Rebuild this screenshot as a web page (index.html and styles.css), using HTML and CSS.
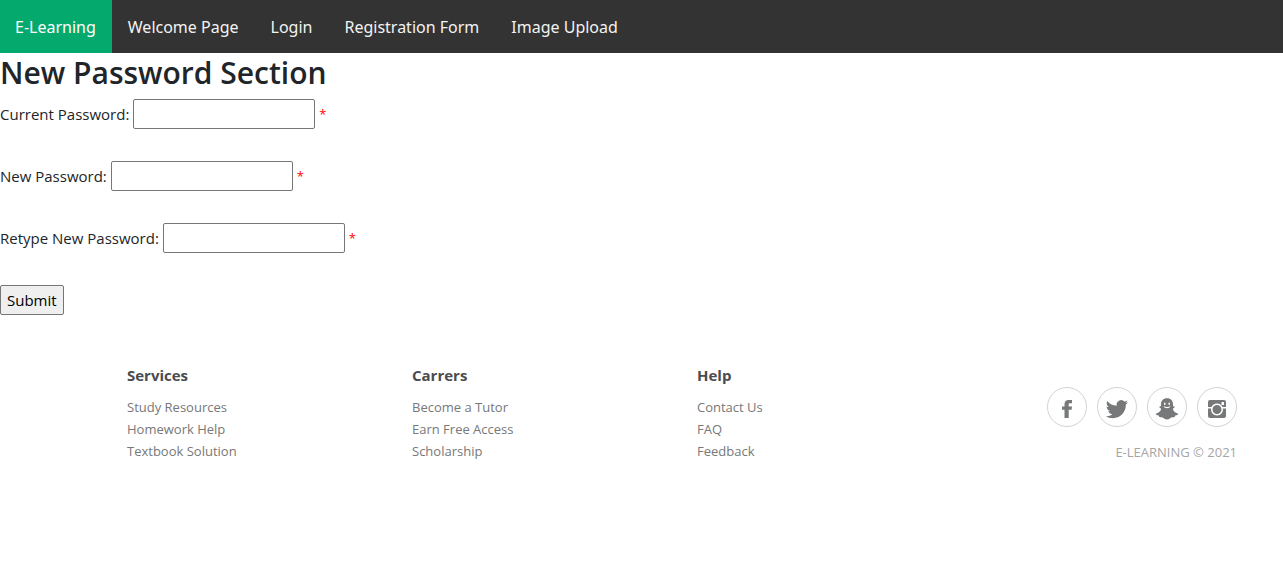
FILE: index.html
```html
<!DOCTYPE html>
<html lang="en">
<head>
<meta charset="utf-8">
<meta name="viewport" content="width=device-width, initial-scale=1">
<title>E-Learning - New Password</title>
<link rel="stylesheet" href="styles.css">
</head>
<body>
<nav class="topnav">
  <a class="active" href="#">E-Learning</a>
  <a href="#">Welcome Page</a>
  <a href="#">Login</a>
  <a href="#">Registration Form</a>
  <a href="#">Image Upload</a>
</nav>
<main>
  <h2 class="title">New Password Section</h2>
  <form class="password-form">
    <div class="field">
      <label for="current">Current Password:</label>
      <input type="password" id="current">
      <span class="required">*</span>
    </div>
    <div class="field">
      <label for="new">New Password:</label>
      <input type="password" id="new">
      <span class="required">*</span>
    </div>
    <div class="field">
      <label for="retype">Retype New Password:</label>
      <input type="password" id="retype">
      <span class="required">*</span>
    </div>
    <button class="submit" type="submit">Submit</button>
  </form>
</main>
<footer class="footer">
  <div class="column">
    <h3>Services</h3>
    <ul>
      <li><a href="#">Study Resources</a></li>
      <li><a href="#">Homework Help</a></li>
      <li><a href="#">Textbook Solution</a></li>
    </ul>
  </div>
  <div class="column">
    <h3>Carrers</h3>
    <ul>
      <li><a href="#">Become a Tutor</a></li>
      <li><a href="#">Earn Free Access</a></li>
      <li><a href="#">Scholarship</a></li>
    </ul>
  </div>
  <div class="column">
    <h3>Help</h3>
    <ul>
      <li><a href="#">Contact Us</a></li>
      <li><a href="#">FAQ</a></li>
      <li><a href="#">Feedback</a></li>
    </ul>
  </div>
  <div class="social">
    <div class="icons">
      <a href="#" aria-label="Facebook"><svg viewBox="0 0 24 24"><path d="M9.500 21v-8.200H7V9.500h2.500V7.300C9.500 4.500 11 3 13.800 3H17v3.300h-1.800c-1.200 0-1.500.5-1.500 1.400v1.800H17l-.4 3.300h-2.900V21z"/></svg></a>
      <a href="#" aria-label="Twitter"><svg viewBox="0 0 24 24"><path d="M23 5.200c-.8.400-1.700.6-2.600.7 1-.6 1.700-1.500 2-2.500-.9.500-1.900.9-2.900 1.100A4.600 4.600 0 0 0 11.700 8.700C7.900 8.500 4.500 6.700 2.300 3.900c-1.200 2.100-.6 4.700 1.400 6.100-.8 0-1.500-.2-2.100-.6 0 2.200 1.500 4.100 3.700 4.600-.7.200-1.400.2-2.100.1.600 1.900 2.300 3.100 4.300 3.200A9.300 9.300 0 0 1 .8 19.200C2.800 20.500 5.200 21.200 7.800 21.200c8.600 0 13.400-7.200 13-13.600.9-.7 1.700-1.500 2.200-2.400z"/></svg></a>
      <a href="#" aria-label="Snapchat"><svg viewBox="0 0 24 24"><path fill-rule="evenodd" d="M12 1.200c3.900 0 6 2.600 6 6v2.200c.9-.3 1.700.1 1.600.8-.1.800-1.900 1-1.700 1.900.4 1.900 2.300 4 4.700 4.400.8.200.7.800.3 1.100-.7.600-1.700.8-2.700 1-.3.500-.2 1.300-.6 1.500-.8.300-2-.2-3.200.3-1.200.6-2.300 2.100-4.400 2.100s-3.200-1.500-4.400-2.100c-1.200-.5-2.400 0-3.200-.3-.4-.2-.3-1-.6-1.500-1-.2-2-.4-2.700-1-.4-.3-.5-.9.300-1.100 2.400-.4 4.300-2.500 4.700-4.400.2-.9-1.600-1.100-1.700-1.900-.1-.7.700-1.100 1.600-.8V7.200c0-3.400 2.100-6 6-6zM9 5.800v2h1.500v-2zm4.500 0v2H15v-2zM8.500 9c.6 1.500 1.900 2.200 3.500 2.200s2.900-.7 3.500-2.200c-1.100.7-2.200 1-3.500 1S9.600 9.700 8.500 9z"/></svg></a>
      <a href="#" aria-label="Instagram"><svg viewBox="0 0 24 24"><path fill-rule="evenodd" d="M5 3h14a2 2 0 0 1 2 2v5h-3.500A6 6 0 0 0 6.500 10H3V5a2 2 0 0 1 2-2zm11.500 2v3H19V5zM3 11.500h3.100a6 6 0 1 0 11.800 0H21V19a2 2 0 0 1-2 2H5a2 2 0 0 1-2-2zM12 8a4.500 4.500 0 1 0 0 9 4.500 4.500 0 0 0 0-9z"/></svg></a>
    </div>
    <p class="copyright">E-LEARNING © 2021</p>
  </div>
</footer>
</body>
</html>
```
FILE: styles.css
```css
* {
  box-sizing: border-box;
}

body {
  margin: 0;
  background: #fff;
  color: #212529;
  font-family: "Open Sans", "Noto Sans", sans-serif;
  font-size: 15px;
  line-height: 24px;
}

a {
  color: inherit;
  text-decoration: none;
}

.topnav {
  display: flex;
  background: #333;
  color: #f2f2f2;
  font-family: "Noto Sans", "Open Sans", sans-serif;
  font-size: 16px;
}

.topnav a {
  padding: 15px 16px 14px;
}

.topnav .active {
  padding-left: 15px;
  background: #04aa6d;
  color: #fff;
}

.title {
  margin: 0 0 6px;
  font-size: 30px;
  font-weight: 600;
  line-height: 40px;
}

.field {
  display: flex;
  align-items: center;
  gap: 4px;
  margin-bottom: 32px;
}

.field input {
  width: 182px;
  height: 30px;
  padding: 1px 2px;
  border: 1px solid #767676;
  border-radius: 2px;
  font: inherit;
}

.required {
  color: red;
  font-size: 13px;
}

.submit {
  height: 30px;
  padding: 0 6px;
  border: 1px solid #767676;
  border-radius: 2px;
  background: #efefef;
  color: #000;
  font: inherit;
}

.footer {
  display: grid;
  grid-template-columns: repeat(4, 1fr);
  gap: 30px;
  padding: 49px 46px 50px 127px;
  color: #777879;
  font-size: 13px;
  line-height: 22px;
}

.column h3 {
  margin: 0 0 10px;
  color: #4b4c4d;
  font-size: 15px;
  font-weight: 700;
  line-height: 22px;
}

.column ul {
  margin: 0;
  padding: 0;
  list-style: none;
}

.social {
  padding-top: 23px;
  text-align: right;
}

.icons {
  display: flex;
  justify-content: flex-end;
  gap: 10px;
}

.icons a {
  display: grid;
  place-items: center;
  width: 40px;
  height: 40px;
  padding-top: 4px;
  border: 1px solid #d2d2d2;
  border-radius: 50%;
}

.icons svg {
  width: 24px;
  height: 24px;
  fill: #777879;
}

.copyright {
  margin: 14px 0 0;
  color: #a5a5a6;
  font-size: 13px;
}
```
